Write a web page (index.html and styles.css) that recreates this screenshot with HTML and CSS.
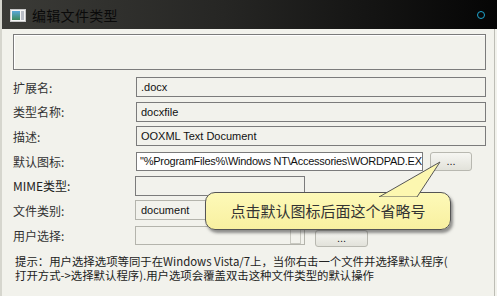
FILE: index.html
```html
<!DOCTYPE html>
<html lang="zh-CN">
  <head>
    <meta charset="UTF-8" />
    <title>编辑文件类型</title>
    <link rel="stylesheet" href="styles.css">
  </head>
  <body>
    <div class="window">
      <div class="titlebar">
        <svg class="app-icon" width="16" height="13" viewBox="0 0 16 13">
          <defs>
            <linearGradient id="ig" x1="0" y1="0" x2="0" y2="1">
              <stop offset="0" stop-color="#5aa8d8" />
              <stop offset="1" stop-color="#3c8a5c" />
            </linearGradient>
          </defs>
          <rect x="0.5" y="0.5" width="15" height="12" fill="#f4f4f4" stroke="#c8c8c8" />
          <rect x="2" y="2" width="8" height="9" fill="url(#ig)" />
          <rect x="11" y="2" width="3" height="9" fill="#b8bcc4" />
        </svg>
        <span class="title">编辑文件类型</span>
        <span class="close-dot"></span>
      </div>

      <div class="content">
        <div class="groupbox"></div>

        <div class="form">
          <div class="row">
            <label>扩展名:</label>
            <div class="field wide">.docx</div>
          </div>
          <div class="row">
            <label>类型名称:</label>
            <div class="field wide">docxfile</div>
          </div>
          <div class="row">
            <label>描述:</label>
            <div class="field wide">OOXML Text Document</div>
          </div>
          <div class="row">
            <label>默认图标:</label>
            <div class="field icon-path">"%ProgramFiles%\Windows NT\Accessories\WORDPAD.EX</div>
            <button class="dots">...</button>
          </div>
          <div class="row">
            <label class="latin">MIME类型:</label>
            <div class="field short"></div>
          </div>
          <div class="row">
            <label>文件类别:</label>
            <div class="field short combo">document</div>
          </div>
          <div class="row">
            <label>用户选择:</label>
            <div class="field short combo disabled"><span class="drop"></span></div>
            <button class="dots small">...</button>
          </div>
        </div>

        <p class="hint">提示：用户选择选项等同于在Windows Vista/7上，当你右击一个文件并选择默认程序(<br>打开方式-&gt;选择默认程序).用户选项会覆盖双击这种文件类型的默认操作</p>
      </div>

      <!-- 提示气泡 -->
      <div class="callout">
        <svg class="callout-tail" width="66" height="36" viewBox="0 0 66 36">
          <path d="M2 36 L63 1 L40 36 Z" fill="#fcf7b0" stroke="#555" stroke-width="1" />
        </svg>
        <div class="callout-box">点击默认图标后面这个省略号</div>
      </div>
    </div>
  </body>
</html>
```

FILE: styles.css
```css
/*—— 全域 ——*/
body {
  margin: 0;
  font-family: "Noto Sans CJK SC", "Liberation Sans", sans-serif;
}

.window {
  position: relative;
  width: 497px;
  height: 296px;
  overflow: hidden;
  background: #f2f2ec;
  box-sizing: border-box;
  border-left: 2px solid #d6d6ce;
}
.window::after {
  /* 右側邊線 */
  content: "";
  position: absolute;
  top: 29px;
  right: 2px;
  width: 1px;
  height: 100%;
  background: #bdbdb5;
}

/*—— 標題列 ——*/
.titlebar {
  display: flex;
  align-items: center;
  height: 29px;
  margin-left: -2px;
  padding-left: 10px;
  background: linear-gradient(to right, #3b3b37, #262624 45%, #050505);
}
.app-icon {
  display: block;
  margin-top: 1px;
}
.title {
  margin-left: 6px;
  font-size: 14px;
  color: #0a0a0a;
  letter-spacing: 0.3px;
}
.close-dot {
  margin-left: auto;
  margin-right: 12px;
  width: 6px;
  height: 6px;
  border: 1.5px solid #1ea6d0;
  border-radius: 50%;
}

/*—— 內容 ——*/
.content {
  padding: 5px 11px 0 11px;
}
.groupbox {
  height: 34px;
  border: 1px solid #7b7b7b;
  box-shadow: inset 1px 1px 0 #fff;
}

.form {
  display: flex;
  flex-direction: column;
  gap: 4.7px;
  margin-top: 7px;
}
.row {
  display: flex;
  align-items: center;
  height: 20px;
}
.row label {
  width: 123px;
  font-size: 12px;
  color: #333;
}
.row label.latin {
  color: #222;
}

.field {
  box-sizing: border-box;
  height: 20px;
  padding: 0 4px;
  border: 1px solid #7b7b7b;
  font-family: "Liberation Sans", sans-serif;
  font-size: 11px;
  line-height: 18px;
  color: #111;
  white-space: nowrap;
  overflow: hidden;
}
.wide {
  flex: 1;
}
.icon-path {
  width: 287px;
  height: 19px;
  line-height: 17px;
  padding-left: 3px;
  letter-spacing: -0.25px;
  background: #fff;
}
.short {
  width: 170px;
  margin-left: -1px;
}
.combo {
  border-color: #b4b4ac;
  padding-left: 5px;
}
.disabled {
  position: relative;
  height: 19px;
}
.drop {
  position: absolute;
  right: 3px;
  top: 2px;
  width: 11px;
  height: 15px;
  border: 1px solid #c8c8c0;
  box-sizing: border-box;
}

.dots {
  width: 42px;
  height: 19px;
  margin-left: 7px;
  padding: 0;
  border: 1px solid #b8b8b0;
  border-radius: 3px;
  background: linear-gradient(#f6f6f2, #e2e2da);
  font-family: "Liberation Sans", sans-serif;
  font-size: 11px;
  color: #222;
}
.dots.small {
  width: 53px;
  height: 17px;
  margin-left: 10px;
  margin-top: 6px;
}

.hint {
  margin: 9px 0 0 2px;
  font-size: 11.4px;
  line-height: 14px;
  color: #222;
}

/*—— 提示氣泡 ——*/
.callout {
  position: absolute;
  left: 203px;
  top: 161px;
}
.callout-tail {
  position: absolute;
  left: 172px;
  top: 0;
  z-index: 2;
}
.callout-box {
  position: relative;
  margin-top: 31px;
  width: 246px;
  height: 38px;
  box-sizing: border-box;
  border: 1px solid #555;
  border-radius: 10px;
  background: linear-gradient(#fdf9b8, #f8f0a0);
  box-shadow: 2px 3px 3px rgba(60, 60, 60, 0.55);
  font-size: 15px;
  line-height: 36px;
  text-align: center;
  color: #333;
  z-index: 1;
}
```
